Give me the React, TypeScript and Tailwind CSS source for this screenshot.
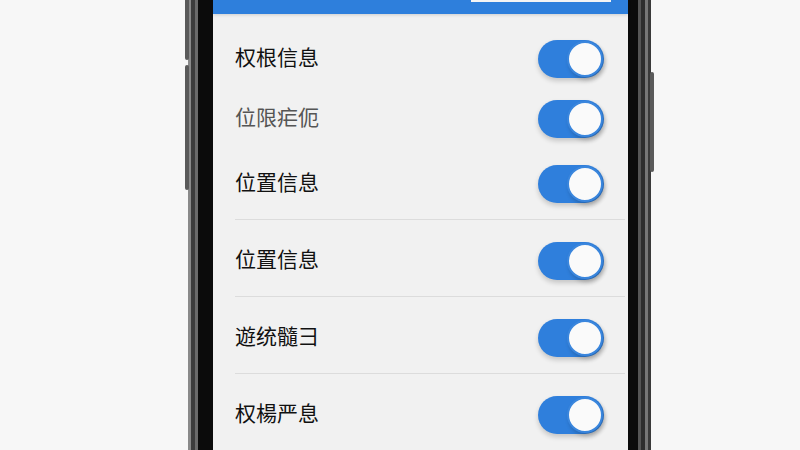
import React from "react";

type Row = { label: string; muted?: boolean; h: string; divider?: boolean };

const rows: Row[] = [
  { label: "权根信息", h: "h-[63px]" },
  { label: "位限疟伌", muted: true, h: "h-[56px]" },
  { label: "位置信息", h: "h-[75px]", divider: true },
  { label: "位置信息", h: "h-[76px]", divider: true },
  { label: "遊统髓彐", h: "h-[76px]", divider: true },
  { label: "权楊严息", h: "h-[76px]" },
];

function Toggle() {
  return (
    <div className="relative mt-[5px] h-[38px] w-[66px] rounded-full bg-[#2f7fdc] shadow-[0_3px_5px_rgba(0,0,0,0.18)]">
      <div className="absolute right-[1px] top-[1px] h-[36px] w-[36px] rounded-full border-[2px] border-[#3a86dd] bg-[#fafafa] shadow-[2px_3px_4px_rgba(0,0,0,0.2)]" />
    </div>
  );
}

export default function App() {
  return (
    <div
      className="flex h-[450px] w-[800px] overflow-hidden bg-[#f7f7f7] pl-[185px]"
      style={{ fontFamily: "'Noto Sans CJK SC', 'Noto Sans', sans-serif" }}
    >
      {/* Phone */}
      <div className="relative flex h-full">
        {/* left side buttons */}
        <div className="absolute left-0 top-0 h-[60px] w-[4px] rounded-b-sm bg-[#5a5a5a]" />
        <div className="absolute left-0 top-[65px] h-[125px] w-[4px] rounded-sm bg-[#5a5a5a]" />
        {/* right side button */}
        <div className="absolute right-0 top-[72px] h-[100px] w-[4px] rounded-sm bg-[#5a5a5a]" />

        {/* left frame */}
        <div className="ml-[3px] flex h-full">
          <div className="w-[3px] bg-[#8a8a8a]" />
          <div className="w-[4px] bg-[#3c3c3c]" />
          <div className="w-[3px] bg-[#6a6a6a]" />
          <div className="w-[15px] bg-[#0b0b0b]" />
        </div>

        {/* Screen */}
        <div className="flex h-full w-[415px] flex-col bg-[#f1f1f1]">
          <div className="relative h-[14px] bg-[#2e7fdc] shadow-[0_1px_3px_rgba(0,0,0,0.15)]">
            <div className="absolute left-[258px] top-0 h-[2px] w-[140px] bg-[#f4f4f4]" />
          </div>
          <div className="flex flex-col pl-[22px] pt-[11px]">
            {rows.map((r, i) => (
              <div key={i} className="flex flex-col">
                <div className={`flex items-center justify-between pr-[24px] ${r.h}`}>
                  <span
                    className={`text-[21px] font-normal leading-none ${
                      r.muted ? "text-[#555555]" : "text-[#111111]"
                    }`}
                  >
                    {r.label}
                  </span>
                  <Toggle />
                </div>
                {r.divider && <div className="mr-[3px] h-[1px] bg-[#dcdcdc]" />}
              </div>
            ))}
          </div>
        </div>

        {/* right frame */}
        <div className="mr-[3px] flex h-full">
          <div className="w-[10px] bg-[#0b0b0b]" />
          <div className="w-[3px] bg-[#555555]" />
          <div className="w-[4px] bg-[#2e2e2e]" />
          <div className="w-[3px] bg-[#777777]" />
          <div className="w-[3px] bg-[#3a3a3a]" />
        </div>
      </div>
    </div>
  );
}
